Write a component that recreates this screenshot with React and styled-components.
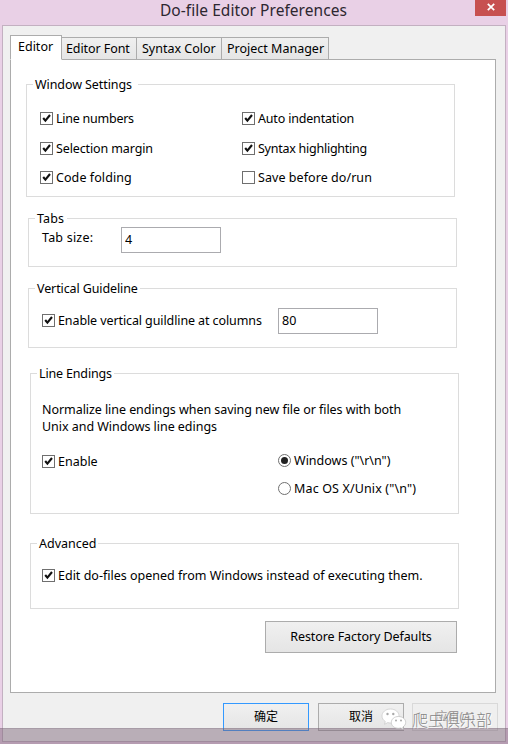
import React from 'react';
import styled, { createGlobalStyle, css } from 'styled-components';

const Global = createGlobalStyle`
  * { box-sizing: border-box; }
  body { margin: 0; overflow: hidden; }
`;

const Window = styled.div`
  position: relative;
  width: 508px;
  height: 744px;
  padding: 0 2px;
  background: #e9d0e6;
  color: #000;
  font-family: 'Noto Sans', 'Noto Sans CJK SC', sans-serif;
  font-size: 12.5px;
  line-height: 17px;
  overflow: hidden;
`;

const TitleBar = styled.header`
  display: flex;
  align-items: flex-start;
  height: 25px;
  padding-left: 158px;
`;

const Title = styled.h1`
  flex: 1;
  margin: 0;
  font-size: 15.5px;
  font-weight: 400;
  line-height: 20px;
  color: #2d2730;
  white-space: nowrap;
`;

const CloseButton = styled.button`
  display: flex;
  align-items: center;
  justify-content: center;
  width: 31px;
  height: 16px;
  padding: 0 0 2px 1px;
  border: 0;
  background: #c75050;
`;

const Client = styled.main`
  display: flex;
  flex-direction: column;
  height: 717px;
  padding: 9px 9px 0 7px;
  border: 1px solid #c3b0c1;
  background: #f0f0f0;
`;

const TabList = styled.nav`
  display: flex;
  align-items: flex-end;
  height: 25px;
  margin-bottom: -1px;
`;

const Tab = styled.button`
  width: ${(p) => p.$width}px;
  height: 23px;
  margin-left: -1px;
  padding: 0 0 1px ${(p) => p.$inset || 4}px;
  border: 1px solid #acacac;
  background: linear-gradient(#f0f0f0, #e5e5e5);
  color: #000;
  font: inherit;
  text-align: left;
  white-space: nowrap;
  letter-spacing: ${(p) => p.$spacing || 0}px;
  ${(p) =>
    p.$active &&
    css`
      height: 25px;
      margin-left: 0;
      padding: 0 0 2px 7px;
      border-bottom-color: #fff;
      background: #fff;
      z-index: 1;
    `}
`;

const Panel = styled.section`
  height: 634px;
  padding: 16px 0 0 15px;
  border: 1px solid #acacac;
  background: #fff;
`;

const Group = styled.fieldset`
  width: 429px;
  height: ${(p) => p.$height}px;
  margin: ${(p) => p.$top || 0}px 0 0 ${(p) => p.$left || 0}px;
  padding: 0;
  border: 1px solid #dcdcdc;
`;

const Legend = styled.legend`
  width: ${(p) => p.$width}px;
  height: 17px;
  margin-left: 6px;
  padding: 0 0 0 2px;
  white-space: nowrap;
`;

const Text = styled.span`
  white-space: nowrap;
  letter-spacing: ${(p) => p.$spacing || 0}px;
`;

const OptionGrid = styled.div`
  display: grid;
  grid-template-columns: 202px auto;
  grid-template-rows: 30px 29px 17px;
  padding: 17px 0 0 13px;
`;

const Option = styled.label`
  display: flex;
  align-items: center;
  gap: 3px;
  height: 17px;
`;

const Box = styled.span`
  display: flex;
  flex: none;
  width: 13px;
  height: 13px;
  border: 1px solid #6f6f6f;
  background: #fff;
`;

const RadioDot = styled.span`
  display: flex;
  flex: none;
  align-items: center;
  justify-content: center;
  width: 13px;
  height: 13px;
  border: 1px solid #707070;
  border-radius: 50%;
  background: #fff;

  &::after {
    content: '';
    width: 7px;
    height: 7px;
    border-radius: 50%;
    background: ${(p) => (p.$on ? '#212121' : 'transparent')};
  }
`;

const Field = styled.input`
  width: 100px;
  height: 26px;
  padding: 0 3px 2px;
  border: 1px solid #ababaf;
  border-radius: 0;
  background: #fff;
  color: #000;
  font: inherit;
  outline: 0;
`;

const TabSizeRow = styled.div`
  display: flex;
  align-items: flex-start;
  padding-left: 13px;
`;

const TabSizeLabel = styled.label`
  width: 79px;
  padding-top: 2px;
`;

const GuidelineRow = styled.div`
  display: flex;
  align-items: flex-start;
  padding: 11px 0 0 13px;

  ${Option} { width: 236px; margin-top: 4px; }
`;

const Note = styled.p`
  display: flex;
  flex-direction: column;
  margin: 19px 0 0 11px;
`;

const EndingRow = styled.div`
  display: flex;
  align-items: flex-start;
  padding: 17px 0 0 11px;

  > ${Option} { width: 236px; padding-top: 2px; }
`;

const RadioList = styled.div`
  display: flex;
  flex-direction: column;
  gap: 11px;
`;

const AdvancedRow = styled.div`
  padding: 15px 0 0 11px;
`;

const Button = styled.button`
  width: 86px;
  height: 28px;
  padding: 0 0 1px;
  border: 1px solid ${(p) => (p.$primary ? '#3399ff' : '#acacac')};
  background: linear-gradient(#f0f0f0, #e5e5e5);
  color: #000;
  font: inherit;
  font-size: 12px;

  &:disabled {
    border-color: #d9d9d9;
    background: #efefef;
    color: #a09a9a;
  }
`;

const RestoreButton = styled(Button)`
  display: block;
  width: 192px;
  height: 32px;
  margin: 12px 0 0 239px;
  font-size: 12.5px;
  letter-spacing: -0.08px;
`;

const Footer = styled.footer`
  display: flex;
  gap: 9px;
  margin: 10px -3px 0 213px;

  ${Button}:last-child { margin-left: -1px; }
`;

const BottomShade = styled.div`
  position: absolute;
  inset: 728px 0 0;
  border-top: 1px solid rgba(120, 105, 120, 0.25);
  background: rgba(120, 96, 116, 0.46);
`;

const Watermark = styled.div`
  position: absolute;
  left: 380px;
  top: 707px;
  display: flex;
  gap: 5px;
  font-family: 'Noto Sans CJK SC', sans-serif;
  font-size: 16px;
  font-weight: 300;
  line-height: 25px;
  color: #858585;
  text-shadow: 1px 1px 0 rgba(255, 255, 255, 0.8);
  white-space: nowrap;
`;

function Check({ on = true, spacing, children }) {
  return (
    <Option>
      <Box>
        {on && (
          <svg width="11" height="11" viewBox="0 0 11 11">
            <path d="M2.200 5 4.400 7.700 9 2" fill="none" stroke="#111" strokeWidth="2.100" />
          </svg>
        )}
      </Box>
      <Text $spacing={spacing}>{children}</Text>
    </Option>
  );
}

function Radio({ on, spacing, children }) {
  return (
    <Option>
      <RadioDot $on={on} />
      <Text $spacing={spacing}>{children}</Text>
    </Option>
  );
}

function ChatIcon() {
  return (
    <svg width="27" height="25" viewBox="0 0 27 25">
      <path d="M10.5 2C5.7 2 2 5.1 2 9c0 2.3 1.2 4.200 3.300 5.500L4.500 17.300l3.200-1.700c.9.300 1.800.400 2.800.400 4.800 0 8.500-3.100 8.500-7S15.300 2 10.500 2Z" fill="#fff" stroke="#c9c9c9" strokeWidth=".7" />
      <path d="M18.500 9.500c-4.100 0-7.200 2.600-7.200 5.900s3.100 5.900 7.200 5.900c.8 0 1.600-.1 2.300-.3l2.700 1.400-.7-2.300c1.800-1.100 2.900-2.800 2.900-4.700 0-3.300-3.200-5.900-7.200-5.900Z" fill="#fff" stroke="#bcbcbc" strokeWidth=".7" />
      <g fill="#aaa">
        <circle cx="7.500" cy="7" r="1.200" />
        <circle cx="13.300" cy="7" r="1.200" />
        <circle cx="16" cy="13.600" r="1" />
        <circle cx="21" cy="13.600" r="1" />
      </g>
    </svg>
  );
}

export default function App() {
  return (
    <Window>
      <Global />
      <TitleBar>
        <Title><Text $spacing={0.05}>Do-file Editor Preferences</Text></Title>
        <CloseButton aria-label="Close">
          <svg width="8" height="8" viewBox="0 0 8 8">
            <path d="M.8.8 7.2 7.2M7.2.8.8 7.2" stroke="#fff" strokeWidth="1.700" />
          </svg>
        </CloseButton>
      </TitleBar>
      <Client>
        <TabList>
          <Tab $active $width={52}>Editor</Tab>
          <Tab $width={76} $spacing={-0.08}>Editor Font</Tab>
          <Tab $width={86} $inset={5}>Syntax Color</Tab>
          <Tab $width={108} $inset={5}>Project Manager</Tab>
        </TabList>
        <Panel>
          <Group $height={121}>
            <Legend $width={105}><Text $spacing={-0.08}>Window Settings</Text></Legend>
            <OptionGrid>
              <Check spacing={-0.25}>Line numbers</Check>
              <Check spacing={-0.18}>Auto indentation</Check>
              <Check spacing={-0.12}>Selection margin</Check>
              <Check spacing={-0.25}>Syntax highlighting</Check>
              <Check spacing={0.08}>Code folding</Check>
              <Check on={false} spacing={0.06}>Save before do/run</Check>
            </OptionGrid>
          </Group>
          <Group $height={57} $top={13} $left={2}>
            <Legend $width={32}><Text $spacing={0.1}>Tabs</Text></Legend>
            <TabSizeRow>
              <TabSizeLabel htmlFor="tab-size"><Text $spacing={0.2}>Tab size:</Text></TabSizeLabel>
              <Field id="tab-size" defaultValue="4" />
            </TabSizeRow>
          </Group>
          <Group $height={68} $top={13} $left={2}>
            <Legend $width={105}><Text $spacing={-0.11}>Vertical Guideline</Text></Legend>
            <GuidelineRow>
              <Check spacing={-0.1}>Enable vertical guildline at columns</Check>
              <Field defaultValue="80" />
            </GuidelineRow>
          </Group>
          <Group $height={149} $top={17} $left={4}>
            <Legend $width={77}><Text $spacing={-0.16}>Line Endings</Text></Legend>
            <Note>
              <Text $spacing={-0.06}>Normalize line endings when saving new file or files with both</Text>
              <Text $spacing={-0.04}>Unix and Windows line edings</Text>
            </Note>
            <EndingRow>
              <Check>Enable</Check>
              <RadioList>
                <Radio on>Windows ("\r\n")</Radio>
                <Radio spacing={0.14}>Mac OS X/Unix ("\n")</Radio>
              </RadioList>
            </EndingRow>
          </Group>
          <Group $height={74} $top={21} $left={4}>
            <Legend $width={61}><Text>Advanced</Text></Legend>
            <AdvancedRow>
              <Check>Edit do-files opened from Windows instead of executing them.</Check>
            </AdvancedRow>
          </Group>
          <RestoreButton>Restore Factory Defaults</RestoreButton>
        </Panel>
        <Footer>
          <Button $primary>确定</Button>
          <Button>取消</Button>
          <Button disabled>应用(A)</Button>
        </Footer>
      </Client>
      <BottomShade />
      <Watermark><ChatIcon /><span>爬虫俱乐部</span></Watermark>
    </Window>
  );
}
